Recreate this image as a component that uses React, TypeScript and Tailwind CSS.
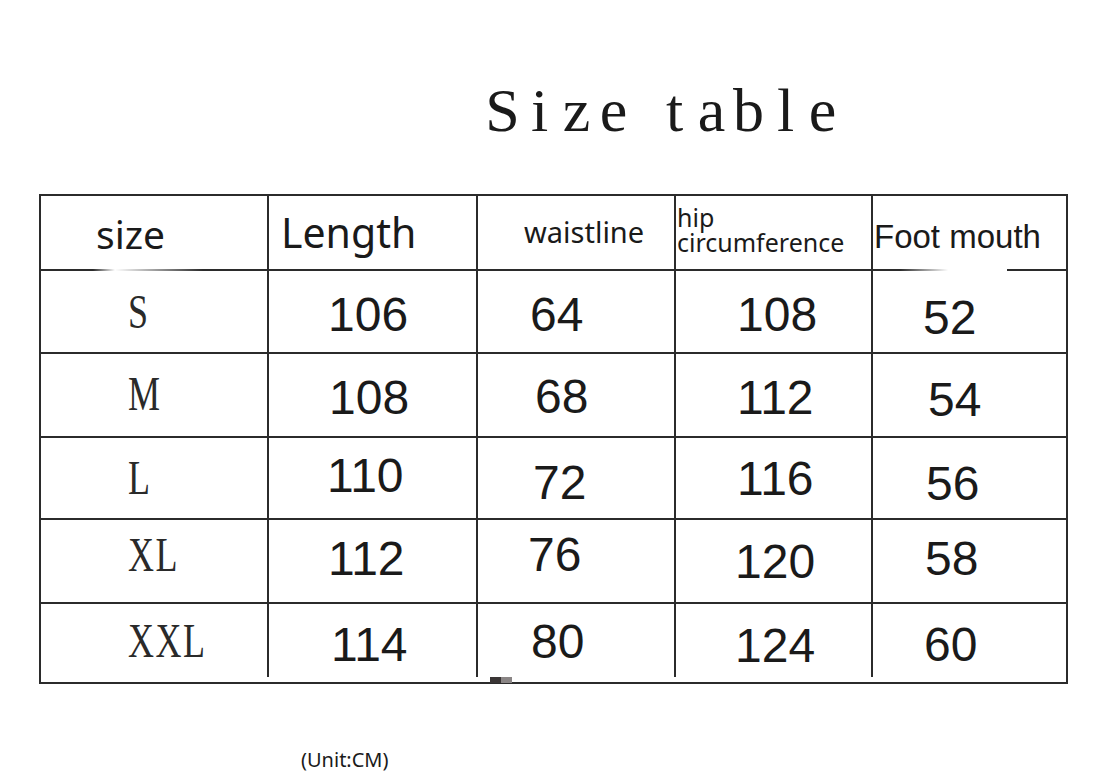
import React from "react";

// column widths measured between the drawn lines
const TITLE = ["S", "i", "z", "e", " ", "t", "a", "b", "l", "e"];

type Cell = { v: string; pl: string; dy: string };

interface Row {
  size: string;
  sizeDy: string;
  cells: Cell[];
}

const rows: Row[] = [
  {
    size: "S",
    sizeDy: "translate-y-[0px]",
    cells: [
      { v: "106", pl: "pl-[59px]", dy: "translate-y-[3px]" },
      { v: "64", pl: "pl-[52px]", dy: "translate-y-[3px]" },
      { v: "108", pl: "pl-[61px]", dy: "translate-y-[3px]" },
      { v: "52", pl: "pl-[50px]", dy: "translate-y-[6px]" },
    ],
  },
  {
    size: "M",
    sizeDy: "-translate-y-[1px]",
    cells: [
      { v: "108", pl: "pl-[60px]", dy: "translate-y-[3px]" },
      { v: "68", pl: "pl-[57px]", dy: "translate-y-[2px]" },
      { v: "112", pl: "pl-[61px]", dy: "translate-y-[3px]" },
      { v: "54", pl: "pl-[55px]", dy: "translate-y-[5px]" },
    ],
  },
  {
    size: "L",
    sizeDy: "translate-y-[0px]",
    cells: [
      { v: "110", pl: "pl-[58px]", dy: "-translate-y-[2px]" },
      { v: "72", pl: "pl-[55px]", dy: "translate-y-[5px]" },
      { v: "116", pl: "pl-[61px]", dy: "translate-y-[1px]" },
      { v: "56", pl: "pl-[53px]", dy: "translate-y-[6px]" },
    ],
  },
  {
    size: "XL",
    sizeDy: "-translate-y-[6px]",
    cells: [
      { v: "112", pl: "pl-[59px]", dy: "-translate-y-[2px]" },
      { v: "76", pl: "pl-[50px]", dy: "-translate-y-[6px]" },
      { v: "120", pl: "pl-[59px]", dy: "translate-y-[1px]" },
      { v: "58", pl: "pl-[52px]", dy: "-translate-y-[2px]" },
    ],
  },
  {
    size: "XXL",
    sizeDy: "translate-y-[0px]",
    cells: [
      { v: "114", pl: "pl-[62px]", dy: "translate-y-[4px]" },
      { v: "80", pl: "pl-[53px]", dy: "translate-y-[1px]" },
      { v: "124", pl: "pl-[59px]", dy: "translate-y-[5px]" },
      { v: "60", pl: "pl-[51px]", dy: "translate-y-[4px]" },
    ],
  },
];

const serif = "font-['Liberation_Serif',serif]";
const sans = "font-['Liberation_Sans',Arial,sans-serif]";
const noto = "font-['Noto_Sans',sans-serif]";

export default function App() {
  return (
    <div className="w-[1106px] h-[780px] bg-white text-[#1a1a1a] overflow-hidden">
      {/* title, typewriter-like spacing */}
      <div className={`mt-[79px] ml-[484px] flex h-[62px] text-[62px] leading-none ${serif}`}>
        {TITLE.map((c, i) => (
          <span
            key={i}
            className={c === " " ? "w-[24px]" : "w-[37px] text-center"}
          >
            {c === " " ? "\u00a0" : c}
          </span>
        ))}
      </div>

      {/* table */}
      <div className="relative mt-[53px] ml-[39px] w-[1029px] border-2 border-[#2b2b2b]">
        <div className="grid grid-cols-[228px_209px_198px_197px_193px] grid-rows-[75px_83px_84px_82px_84px_73px]">
          {/* header */}
          <div className="border-r-2 border-b-2 border-[#2b2b2b] pl-[55px] pt-[18px]">
            <span className={`text-[39px] leading-none ${noto}`}>size</span>
          </div>
          <div className="border-r-2 border-b-2 border-[#2b2b2b] pl-[12px] pt-[16px]">
            <span className={`text-[41px] leading-none ${noto}`}>Length</span>
          </div>
          <div className="border-r-2 border-b-2 border-[#2b2b2b] pl-[46px] pt-[21px]">
            <span className={`text-[29px] leading-none ${noto}`}>waistline</span>
          </div>
          <div className={`border-r-2 border-b-2 border-[#2b2b2b] pl-[1px] pt-[9px] text-[25px] leading-[25px] ${noto}`}>
            <div>hip</div>
            <div>circumference</div>
          </div>
          <div className="border-b-2 border-[#2b2b2b] pl-[1px] pt-[24px]">
            <span className={`text-[33px] leading-none ${sans}`}>Foot mouth</span>
          </div>

          {/* body */}
          {rows.map((r, ri) => {
            const last = ri === rows.length - 1;
            const bb = last ? "" : "border-b-2";
            return (
              <React.Fragment key={r.size}>
                <div className={`flex items-center border-r-2 ${bb} border-[#2b2b2b] pl-[87px]`}>
                  <span
                    className={`origin-left scale-x-75 tracking-[2px] text-[48px] leading-none text-[#2a2a2a] ${serif} ${r.sizeDy}`}
                  >
                    {r.size}
                  </span>
                </div>
                {r.cells.map((c, ci) => (
                  <div
                    key={ci}
                    className={`flex items-center ${ci < 3 ? "border-r-2" : ""} ${bb} border-[#2b2b2b] ${c.pl}`}
                  >
                    <span className={`text-[48px] leading-none ${sans} ${c.dy}`}>{c.v}</span>
                  </div>
                ))}
              </React.Fragment>
            );
          })}
        </div>
        <div className="h-[5px]" />

        {/* faded patches on the header line */}
        <div className="absolute left-[52px] top-[72px] h-[4px] w-[110px] bg-linear-to-r from-white/0 via-white via-20% to-white/0" />
        <div className="absolute left-[859px] top-[72px] h-[4px] w-[107px] bg-linear-to-r from-white/0 via-white via-45% to-white" />

        {/* small grey mark on bottom line */}
        <div className="absolute left-[449px] top-[481px] flex h-[6px]">
          <div className="w-[11px] bg-[#3a3535]" />
          <div className="w-[11px] bg-[#8a8585]" />
        </div>
      </div>

      {/* unit */}
      <div className={`mt-[66px] ml-[301px] text-[20px] leading-none ${noto}`}>(Unit:CM)</div>
    </div>
  );
}
